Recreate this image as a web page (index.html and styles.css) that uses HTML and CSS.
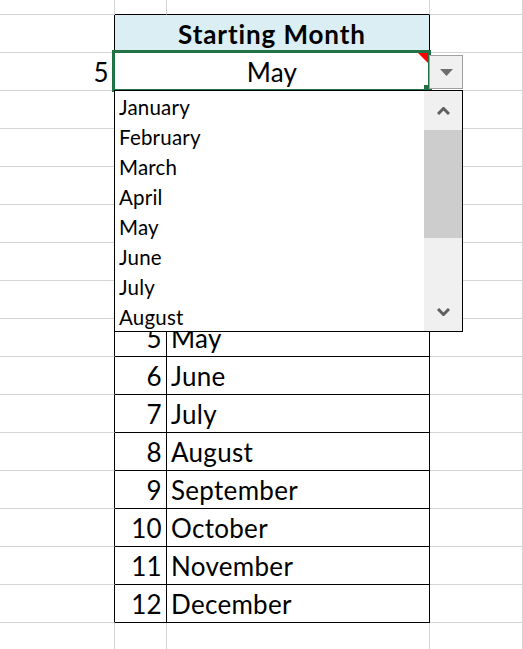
FILE: index.html
```html
<!DOCTYPE html>
<html>
<head>
<meta charset="utf-8">
<link rel="stylesheet" href="styles.css">
</head>
<body>
<div class="sheet">
  <div class="row r0"><div class="c"></div><div class="c top"></div><div class="c top"></div><div class="c"></div></div>
  <div class="row"><div class="c edge"></div><div class="c t m hdr">Starting Month</div><div class="c"></div></div>
  <div class="row"><div class="c edge num">5</div><div class="c t m sel">May</div><div class="c"></div></div>
  <div class="row"><div class="c edge"></div><div class="c t num"></div><div class="c t mon"></div><div class="c"></div></div>
  <div class="row"><div class="c edge"></div><div class="c t num"></div><div class="c t mon"></div><div class="c"></div></div>
  <div class="row"><div class="c edge"></div><div class="c t num"></div><div class="c t mon"></div><div class="c"></div></div>
  <div class="row"><div class="c edge"></div><div class="c t num"></div><div class="c t mon"></div><div class="c"></div></div>
  <div class="row"><div class="c edge"></div><div class="c t num"></div><div class="c t mon"></div><div class="c"></div></div>
  <div class="row"><div class="c edge"></div><div class="c t num"></div><div class="c t mon"></div><div class="c"></div></div>
  <div class="row"><div class="c edge"></div><div class="c t num">5</div><div class="c t mon">May</div><div class="c"></div></div>
  <div class="row"><div class="c edge"></div><div class="c t num">6</div><div class="c t mon">June</div><div class="c"></div></div>
  <div class="row"><div class="c edge"></div><div class="c t num">7</div><div class="c t mon">July</div><div class="c"></div></div>
  <div class="row"><div class="c edge"></div><div class="c t num">8</div><div class="c t mon">August</div><div class="c"></div></div>
  <div class="row"><div class="c edge"></div><div class="c t num">9</div><div class="c t mon">September</div><div class="c"></div></div>
  <div class="row"><div class="c edge"></div><div class="c t num">10</div><div class="c t mon">October</div><div class="c"></div></div>
  <div class="row"><div class="c edge"></div><div class="c t num">11</div><div class="c t mon">November</div><div class="c"></div></div>
  <div class="row"><div class="c edge"></div><div class="c t num">12</div><div class="c t mon">December</div><div class="c"></div></div>
  <div class="row"><div class="c"></div><div class="c"></div><div class="c"></div><div class="c"></div></div>

  <div class="selection"></div>
  <div class="handle"></div>
  <div class="comment"></div>
  <div class="ddbtn"><svg width="13" height="7" viewBox="0 0 13 7"><polygon points="0,0 13,0 6.5,7" fill="#6e6e6e"/></svg></div>

  <div class="list">
    <div class="items">
      <div class="item">January</div>
      <div class="item">February</div>
      <div class="item">March</div>
      <div class="item">April</div>
      <div class="item">May</div>
      <div class="item">June</div>
      <div class="item">July</div>
      <div class="item">August</div>
    </div>
    <div class="scroll">
      <div class="arrow"><svg width="13" height="8" viewBox="0 0 13 8"><polyline points="1,7 6.5,1.5 12,7" fill="none" stroke="#606060" stroke-width="3"/></svg></div>
      <div class="thumb"></div>
      <div class="track"></div>
      <div class="arrow"><svg width="13" height="8" viewBox="0 0 13 8"><polyline points="1,1 6.5,6.5 12,1" fill="none" stroke="#606060" stroke-width="3"/></svg></div>
    </div>
  </div>
</div>
</body>
</html>
```
FILE: styles.css
```css
html, body {
  margin: 0;
  padding: 0;
  background: #ffffff;
}
body {
  width: 523px;
  height: 649px;
  overflow: hidden;
}
.sheet {
  position: relative;
  font-family: Lato, "Liberation Sans", sans-serif;
  color: #000;
}
.row {
  display: grid;
  grid-template-columns: 115px 52px 263px 1fr;
  height: 38px;
}
.row.r0 {
  height: 15px;
}
.c {
  box-sizing: border-box;
  border-right: 1px solid #d4d4d4;
  border-bottom: 1px solid #d4d4d4;
  font-size: 26px;
  letter-spacing: 0.3px;
  line-height: 36px;
  padding-top: 1px;
  white-space: nowrap;
  overflow: hidden;
}
.c.top {
  border-bottom-color: #000;
}
.c.edge {
  border-right-color: #000;
}
.c.t {
  border-right-color: #000;
  border-bottom-color: #000;
}
.c.m {
  grid-column: span 2;
  text-align: center;
}
.hdr {
  background: #daeef3;
  font-weight: bold;
  letter-spacing: 0.9px;
}
.num {
  text-align: right;
  padding-right: 4px;
}
.edge.num {
  padding-right: 5px;
}
.mon {
  padding-left: 4px;
}
.selection {
  position: absolute;
  left: 112px;
  top: 50px;
  width: 319px;
  height: 42px;
  box-sizing: border-box;
  border: 3px solid #217346;
}
.handle {
  position: absolute;
  left: 424px;
  top: 85px;
  width: 8px;
  height: 6px;
  background: #217346;
}
.comment {
  position: absolute;
  left: 418px;
  top: 53px;
  width: 0;
  height: 0;
  border-top: 10px solid #ff0000;
  border-left: 10px solid transparent;
}
.ddbtn {
  position: absolute;
  left: 429px;
  top: 55px;
  width: 34px;
  height: 34px;
  box-sizing: border-box;
  border: 1px solid #a0a0a0;
  background: #f0f0f0;
  display: flex;
  align-items: center;
  justify-content: center;
}
.ddbtn svg {
  margin-top: 1px;
}
.list {
  position: absolute;
  left: 114px;
  top: 90px;
  width: 349px;
  height: 242px;
  box-sizing: border-box;
  border: 1px solid #000;
  background: #fff;
  display: flex;
  z-index: 2;
}
.items {
  flex: 1;
  overflow: hidden;
  padding-top: 1px;
  padding-left: 4px;
}
.item {
  font-size: 20.5px;
  letter-spacing: 0.2px;
  line-height: 30px;
  white-space: nowrap;
}
.scroll {
  width: 38px;
  background: #f0f0f0;
  display: flex;
  flex-direction: column;
}
.arrow {
  height: 39px;
  display: flex;
  align-items: center;
  justify-content: center;
}
.thumb {
  height: 108px;
  background: #cdcdcd;
}
.track {
  flex: 1;
}
```
